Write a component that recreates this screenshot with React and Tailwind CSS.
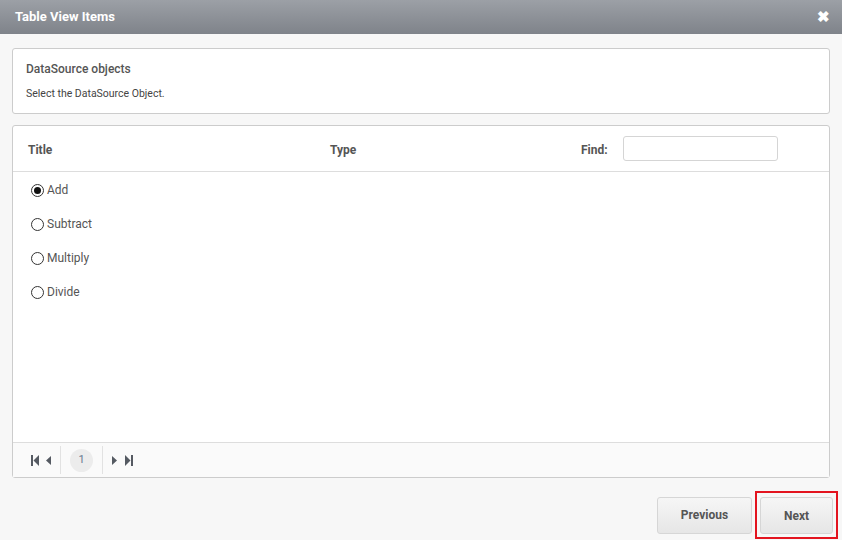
const rows = ['Add', 'Subtract', 'Multiply', 'Divide'];

const Radio = ({ checked }) => (
  <span className="w-[13px] h-[13px] rounded-full border border-[#333] bg-white flex items-center justify-center shrink-0">
    {checked && <span className="w-[7px] h-[7px] rounded-full bg-[#111]" />}
  </span>
);

const First = () => (
  <svg width="8" height="11" viewBox="0 0 8 11" className="fill-[#555a62]">
    <rect x="0" y="0" width="2" height="11" />
    <path d="M8 0 L2.5 5.5 L8 11 Z" />
  </svg>
);
const Prev = () => (
  <svg width="5" height="9" viewBox="0 0 5 9" className="fill-[#555a62]">
    <path d="M5 0 L0 4.5 L5 9 Z" />
  </svg>
);
const NextIcon = () => (
  <svg width="5" height="9" viewBox="0 0 5 9" className="fill-[#555a62]">
    <path d="M0 0 L5 4.5 L0 9 Z" />
  </svg>
);
const Last = () => (
  <svg width="8" height="11" viewBox="0 0 8 11" className="fill-[#555a62]">
    <path d="M0 0 L5.5 5.5 L0 11 Z" />
    <rect x="6" y="0" width="2" height="11" />
  </svg>
);

export default function App() {
  return (
    <div className="w-[842px] h-[540px] bg-[#f7f7f7] flex flex-col font-['Roboto',sans-serif] overflow-hidden">
      <header className="h-[34px] shrink-0 bg-gradient-to-b from-[#9ca0a6] to-[#7f838a] flex items-center justify-between pl-[15px] pr-[12px]">
        <h1 className="text-[13px] font-bold text-white">Table View Items</h1>
        <span className="text-white text-[15px] font-bold leading-none">✖</span>
      </header>

      <div className="flex-1 flex flex-col px-[12px] pt-[14px]">
        <section className="h-[66px] bg-white border border-[#ccc] rounded-[3px] px-[13px] pt-[12px]">
          <h2 className="text-[12px] font-medium text-[#555] leading-[16px]">DataSource objects</h2>
          <p className="text-[10.5px] text-[#444] mt-[10px] leading-[14px]">Select the DataSource Object.</p>
        </section>

        <section className="mt-[11px] h-[353px] bg-white border border-[#ccc] rounded-[3px] flex flex-col">
          <div className="h-[46px] pt-[2px] flex items-center border-b border-[#ddd] text-[12px] font-bold text-[#555] shrink-0">
            <span className="pl-[15px] w-[317px]">Title</span>
            <span className="w-[251px]">Type</span>
            <span className="w-[42px]">Find:</span>
            <input className="w-[155px] h-[25px] -mt-[2px] border border-[#d5d5d5] rounded-[3px] bg-white" />
          </div>
          <div className="flex-1 pt-[1px]">
            {rows.map((r, i) => (
              <div key={r} className="h-[34px] flex items-center gap-[3px] pl-[18px] text-[12px] text-[#555]">
                <Radio checked={i === 0} />
                <span>{r}</span>
              </div>
            ))}
          </div>
          <div className="h-[35px] shrink-0 border-t border-[#ddd] bg-[#fafafa] flex items-center pl-[18px]">
            <div className="flex items-center gap-[7px] w-[29px]">
              <First />
              <Prev />
            </div>
            <span className="w-px h-[28px] bg-[#e2e2e2]" />
            <span className="mx-[9px] w-[23px] h-[23px] rounded-full bg-[#ececec] text-[11px] text-[#6a7a90] flex items-center justify-center">1</span>
            <span className="w-px h-[28px] bg-[#e2e2e2]" />
            <div className="flex items-center gap-[8px] pl-[9px]">
              <NextIcon />
              <Last />
            </div>
          </div>
        </section>

        <div className="flex justify-end items-center mt-[13px] -mr-[8px]">
          <button className="w-[95px] h-[37px] bg-gradient-to-b from-[#f6f6f6] to-[#e6e6e6] border border-[#d6d6d6] rounded-[3px] text-[12px] font-bold text-[#555] mr-[3px]">
            Previous
          </button>
          <div className="border-2 border-[#e3141f] pt-[4px] pb-[3px] px-[3px]">
            <button className="w-[73px] h-[37px] bg-gradient-to-b from-[#f6f6f6] to-[#e6e6e6] border border-[#d6d6d6] rounded-[3px] text-[12px] font-bold text-[#555]">
              Next
            </button>
          </div>
        </div>
      </div>
    </div>
  );
}
